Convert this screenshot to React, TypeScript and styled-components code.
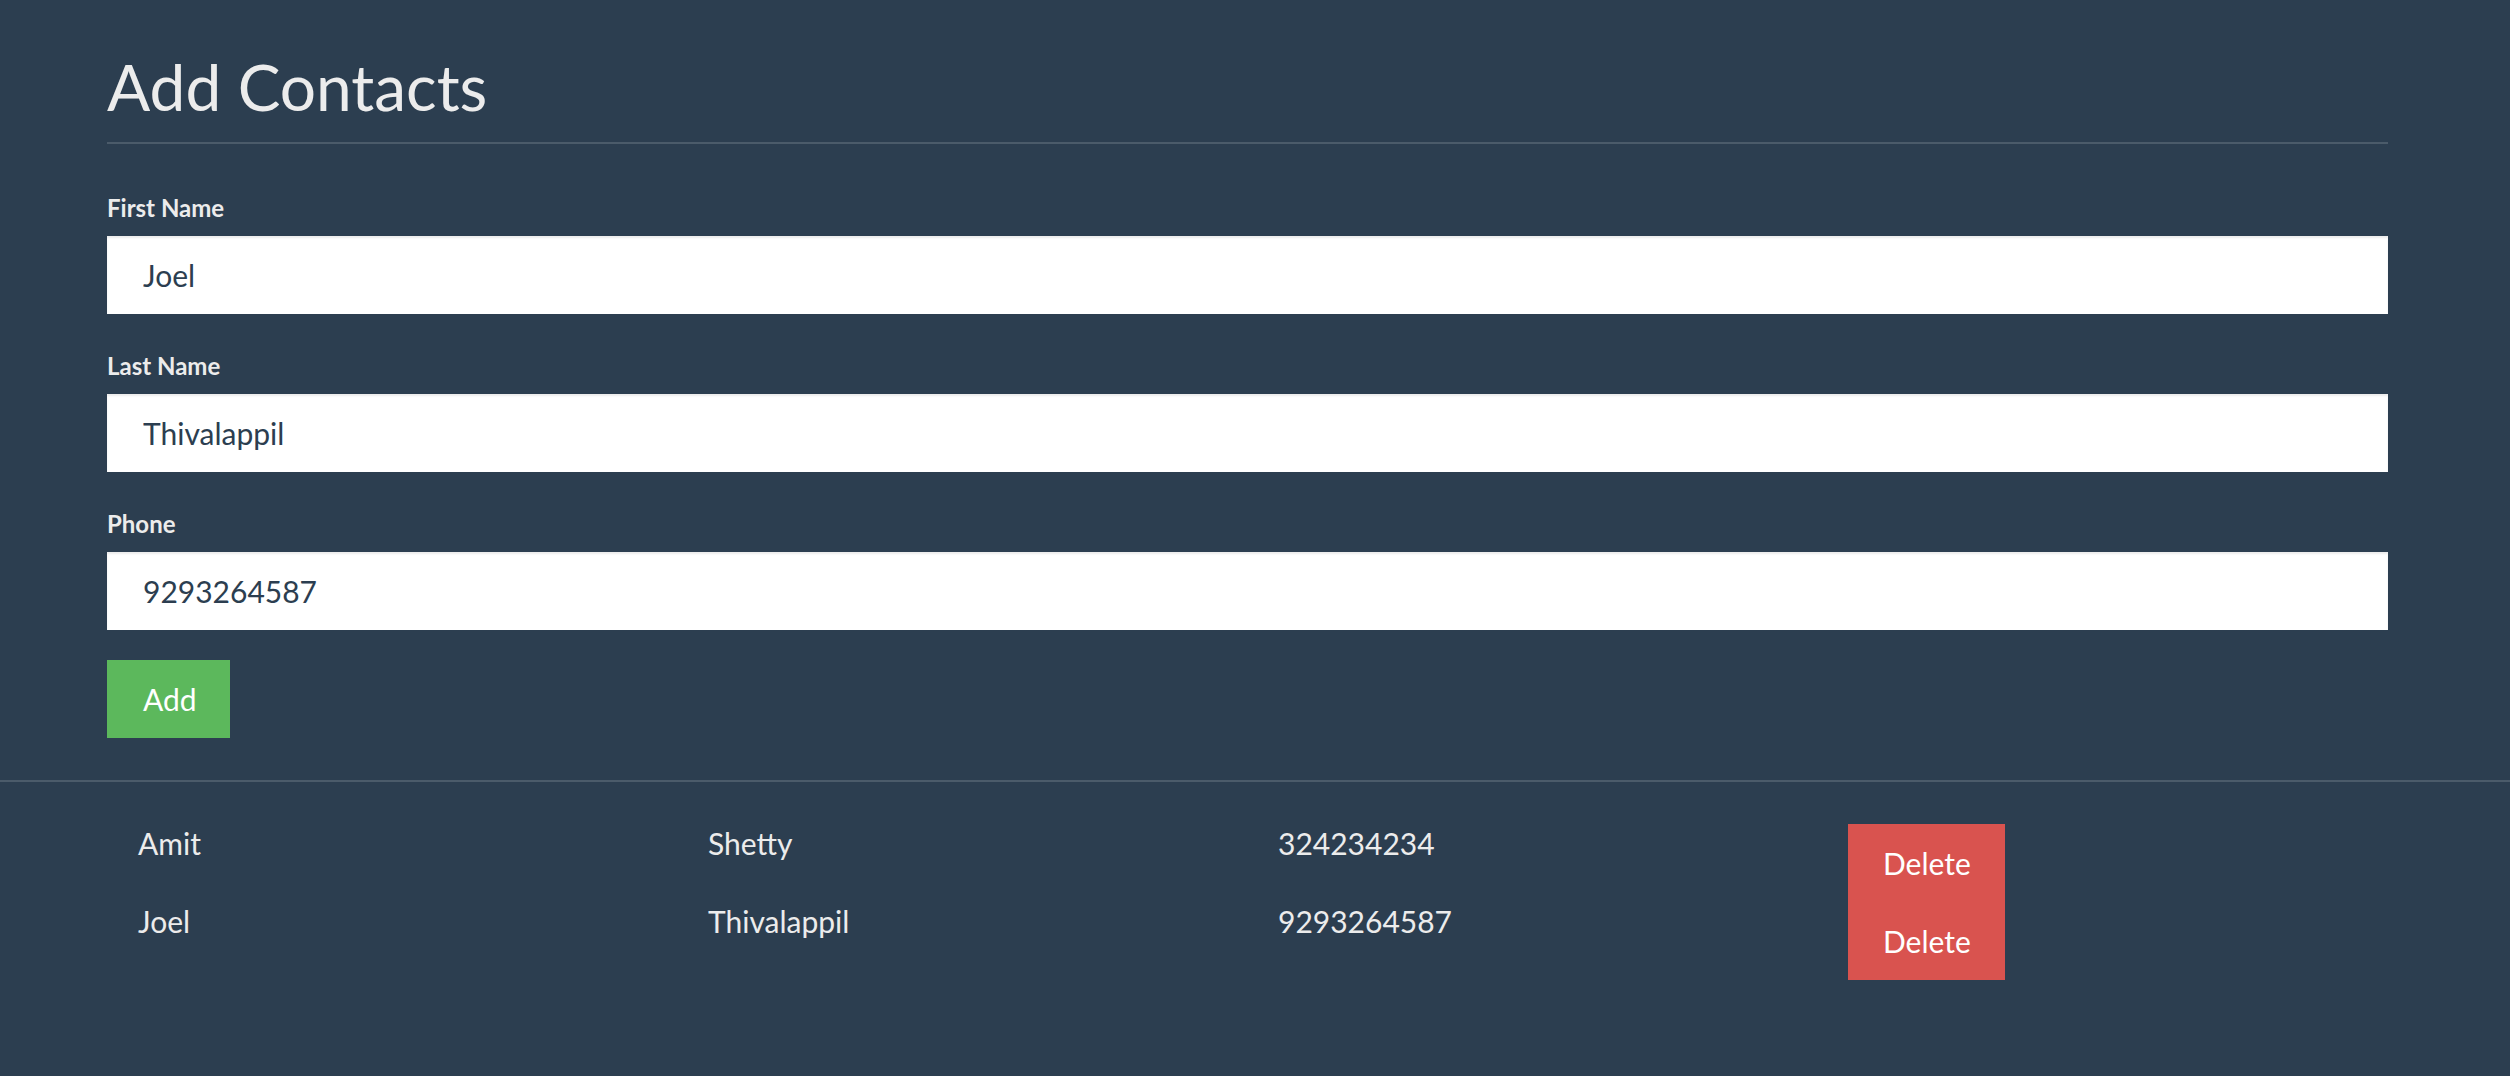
import { useState } from "react"
import styled, { createGlobalStyle } from "styled-components"

const GlobalStyle = createGlobalStyle`
  html, body {
    margin: 0;
    padding: 0;
    background: #2c3e50;
  }
  body {
    font-family: Lato, "Open Sans", "Liberation Sans", sans-serif;
    color: #ececec;
  }
`

const Page = styled.div`
  min-height: 1076px;
  background: #2c3e50;
`

const Container = styled.div`
  width: 2281px;
  margin-left: 107px;
`

const Header = styled.header`
  padding-top: 50px;
`

const Title = styled.h1`
  margin: 0;
  font-size: 64px;
  line-height: 74px;
  font-weight: 400;
  color: #ececec;
`

const Rule = styled.hr<{ $full?: boolean }>`
  margin: 0;
  border: 0;
  border-top: 2px solid #4b5b6a;
  width: ${p => (p.$full ? "100%" : "auto")};
`

const Form = styled.form`
  display: flex;
  flex-direction: column;
  gap: 37px;
  padding-top: 49px;
`

const Field = styled.div`
  display: flex;
  flex-direction: column;
  gap: 13px;
`

const Label = styled.label`
  font-size: 24px;
  line-height: 30px;
  font-weight: 700;
  color: #ececec;
`

const Input = styled.input`
  box-sizing: border-box;
  height: 78px;
  width: 100%;
  padding: 0 36px;
  border: 0;
  border-radius: 0;
  background: #fff;
  box-shadow: inset 0 2px 2px rgba(0, 0, 0, 0.075);
  font-family: inherit;
  font-size: 30px;
  color: #2c3e50;
  outline: none;
`

const Button = styled.button<{ $tone: "add" | "delete" }>`
  box-sizing: border-box;
  height: 78px;
  padding: ${p => (p.$tone === "add" ? "0 33px 0 36px" : "0 34px 0 35px")};
  border: 0;
  border-radius: 0;
  background: ${p => (p.$tone === "add" ? "#5cb85c" : "#d9534f")};
  color: #fff;
  font-family: inherit;
  font-size: 30px;
  cursor: pointer;
`

const Actions = styled.div`
  display: flex;
  margin-top: -7px;
  padding-bottom: 42px;
`

const List = styled.div`
  width: 2280px;
  margin-left: 107px;
  padding-top: 42px;
`

const Row = styled.div`
  display: grid;
  grid-template-columns: repeat(4, 570px);
  height: 78px;
`

const Cell = styled.div`
  padding: 1px 0 0 31px;
  font-size: 30px;
  line-height: 36px;
  color: #ececec;
`

const ButtonCell = styled.div`
  padding-left: 31px;
`

const initial = [
  { id: 1, first: "Amit", last: "Shetty", phone: "324234234" },
  { id: 2, first: "Joel", last: "Thivalappil", phone: "9293264587" },
]

const App = () => {
  const [contacts, setContacts] = useState(initial)
  const [first, setFirst] = useState("Joel")
  const [last, setLast] = useState("Thivalappil")
  const [phone, setPhone] = useState("9293264587")

  const handleAdd = (e) => {
    e.preventDefault()
    setContacts([...contacts, { id: Date.now(), first, last, phone }])
  }

  return (
    <Page>
      <GlobalStyle />
      <Container>
        <Header>
          <Title>Add Contacts</Title>
        </Header>
        <Rule style={{ marginTop: 18 }} />
        <Form onSubmit={handleAdd}>
          <Field>
            <Label>First Name</Label>
            <Input value={first} onChange={e => setFirst(e.target.value)} />
          </Field>
          <Field>
            <Label>Last Name</Label>
            <Input value={last} onChange={e => setLast(e.target.value)} />
          </Field>
          <Field>
            <Label>Phone</Label>
            <Input value={phone} onChange={e => setPhone(e.target.value)} />
          </Field>
          <Actions>
            <Button type="submit" $tone="add">Add</Button>
          </Actions>
        </Form>
      </Container>
      <Rule $full />
      <List>
        {contacts.map(c => (
          <Row key={c.id}>
            <Cell>{c.first}</Cell>
            <Cell>{c.last}</Cell>
            <Cell>{c.phone}</Cell>
            <ButtonCell>
              <Button $tone="delete" onClick={() => setContacts(contacts.filter(x => x.id !== c.id))}>
                Delete
              </Button>
            </ButtonCell>
          </Row>
        ))}
      </List>
    </Page>
  )
}

export default App
